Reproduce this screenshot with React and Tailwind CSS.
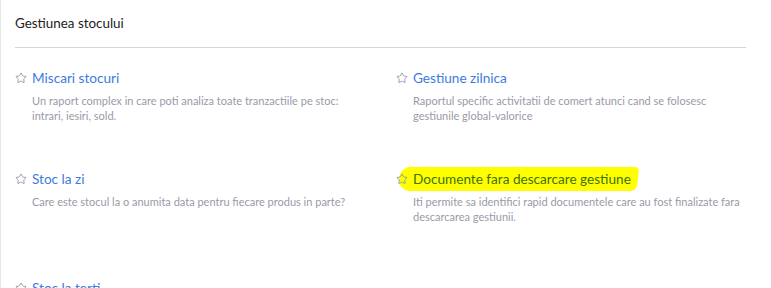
import { Star } from "lucide-react";

const ROWS = [
  {
    h: "h-[101px]",
    items: [
      {
        title: "Miscari stocuri",
        text: "Un raport complex in care poti analiza toate tranzactiile pe stoc: intrari, iesiri, sold.",
      },
      {
        title: "Gestiune zilnica",
        text: "Raportul specific activitatii de comert atunci cand se folosesc gestiunile global-valorice",
      },
    ],
  },
  {
    h: "h-[109px]",
    items: [
      {
        title: "Stoc la zi",
        text: "Care este stocul la o anumita data pentru fiecare produs in parte?",
      },
      {
        title: "Documente fara descarcare gestiune",
        text: "Iti permite sa identifici rapid documentele care au fost finalizate fara descarcarea gestiunii.",
        marked: true,
      },
    ],
  },
  { h: "h-[40px]", items: [{ title: "Stoc la terti", text: "" }, null] },
];

function ReportItem({ item, left }) {
  if (!item) return <div />;
  return (
    <div className={left ? "pr-[45px]" : "pr-[20px]"}>
      <div className="relative flex items-center gap-[5px]">
        {item.marked ? (
          <div className="absolute left-[3px] top-[-2px] h-[24px] w-[239px] -skew-x-6 rounded-[10px_4px_6px_14px/12px_6px_8px_14px] bg-[#ffff00]" />
        ) : null}
        <Star className="relative h-[12px] w-[12px] text-[#8a8fa0]" strokeWidth={1.7} />
        <a
          href="#"
          className={
            item.marked
              ? "relative text-[13.6px] leading-[20px] text-[#3a7408]"
              : "relative text-[13.6px] leading-[20px] text-[#3c7be0]"
          }
        >
          {item.title}
        </a>
      </div>
      {item.text ? (
        <p className="mt-[5px] pl-[17px] text-[11px] leading-[15px] text-[#999aa8]">
          {item.text}
        </p>
      ) : null}
    </div>
  );
}

export default function App() {
  return (
    <div className="h-[288px] w-[771px] overflow-hidden border-l border-[#e6e6e6] bg-white font-['Lato',sans-serif]">
      <div className="pl-[14px] pt-[15px]">
        <h2 className="w-[731px] border-b border-[#d6d6d6] pb-[15px] text-[13.4px] leading-[17px] text-[#222]">
          Gestiunea stocului
        </h2>
        <div className="mt-[20px] flex flex-col">
          {ROWS.map((row, i) => (
            <div key={i} className={`grid grid-cols-[381px_1fr] ${row.h}`}>
              <ReportItem item={row.items[0]} left />
              <ReportItem item={row.items[1]} />
            </div>
          ))}
        </div>
      </div>
    </div>
  );
}
